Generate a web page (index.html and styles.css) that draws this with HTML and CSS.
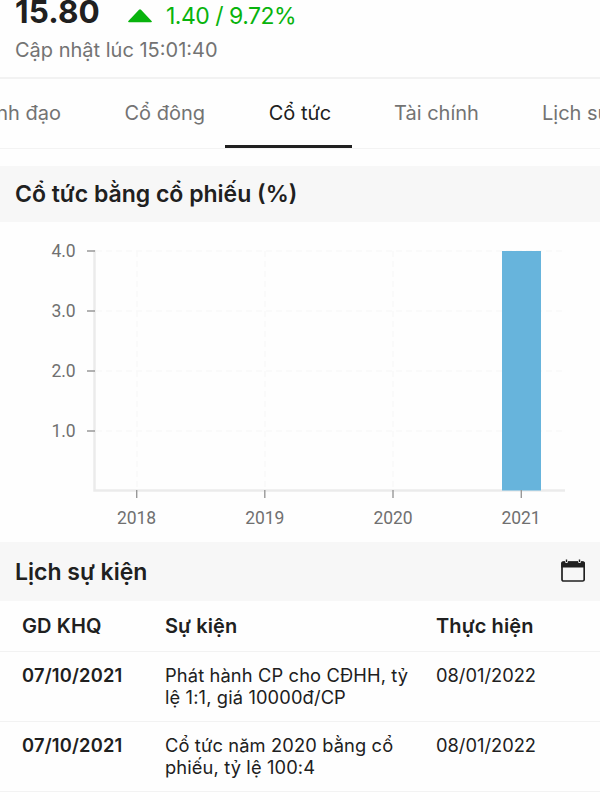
FILE: index.html
```
<!DOCTYPE html>
<html lang="vi">
<head>
<meta charset="utf-8">
<title>Cổ tức</title>
<link rel="stylesheet" href="styles.css">
</head>
<body>
<header class="quote">
  <div class="quote-row">
    <span class="price">15.80</span>
    <svg class="up" width="24" height="14" viewBox="0 0 24 14"><path d="M11 .7Q12 -.2 13 .7L23.6 12Q24.4 13.2 23 13.2H1Q-.4 13.2.4 12Z" fill="#08b30d"/></svg>
    <span class="change">1.40 / 9.72%</span>
  </div>
  <div class="updated">Cập nhật lúc 15:01:40</div>
</header>
<nav class="tabs">
  <a class="tab tab-leaders">Lãnh đạo</a>
  <a class="tab tab-holders">Cổ đông</a>
  <a class="tab tab-dividend active">Cổ tức</a>
  <a class="tab tab-finance">Tài chính</a>
  <a class="tab tab-history">Lịch sử</a>
</nav>
<h2 class="section section-chart">Cổ tức bằng cổ phiếu (%)</h2>
<svg class="chart" width="600" height="320" viewBox="0 222 600 320">
  <g class="grid">
    <path d="M96 251H564M96 311H564M96 371H564M96 431H564M137 251V490M265 251V490M393 251V490"/>
  </g>
  <path class="axis" d="M94.5 250V490.5H565"/>
  <rect x="502" y="251" width="39" height="239.5" fill="#67b4dc"/>
  <path class="ticks" d="M87 251H95M87 311H95M87 371H95M87 431H95M136.7 490V498M264.8 490V498M393 490V498M521.3 490V498"/>
  <g class="label y-label">
    <text x="75.5" y="257.3">4.0</text>
    <text x="75.5" y="317.3">3.0</text>
    <text x="75.5" y="377.3">2.0</text>
    <text x="75.5" y="437.2">1.0</text>
  </g>
  <g class="label x-label">
    <text x="136.5" y="524.4">2018</text>
    <text x="264.7" y="524.4">2019</text>
    <text x="393" y="524.4">2020</text>
    <text x="521" y="524.4">2021</text>
  </g>
</svg>
<h2 class="section section-events">
  <span>Lịch sự kiện</span>
  <svg class="calendar" width="24" height="24" viewBox="0 0 24 24"><rect x="1" y="3.2" width="22.2" height="18.8" rx="1.6" fill="none" stroke="#202020" stroke-width="1.7"/><path d="M.2 8.5V4.3Q.2 2.5 2 2.5H22.2Q24 2.5 24 4.3V8.5Z" fill="#202020"/><circle cx="5.5" cy="2.5" r="1.5" fill="#f7f7f7"/><circle cx="18.5" cy="2.5" r="1.5" fill="#f7f7f7"/><path d="M5.5 .5V3M18.5 .5V3" stroke="#202020" stroke-width="1.4"/></svg>
</h2>
<div class="events">
  <div class="row head"><span>GD KHQ</span><span>Sự kiện</span><span>Thực hiện</span></div>
  <div class="row"><b>07/10/2021</b><span class="event">Phát hành CP cho CĐHH, tỷ<br>lệ 1:1, giá 10000đ/CP</span><span>08/01/2022</span></div>
  <div class="row"><b>07/10/2021</b><span class="event">Cổ tức năm 2020 bằng cổ<br>phiếu, tỷ lệ 100:4</span><span>08/01/2022</span></div>
</div>
</body>
</html>
```
FILE: styles.css
```
* { box-sizing: border-box; }
body {
  margin: 0;
  height: 800px;
  overflow: hidden;
  background: #fefefe;
  color: #202020;
  font-family: Inter, "Liberation Sans", sans-serif;
}
.quote {
  height: 79px;
  padding-left: 15px;
  border-bottom: 2px solid #f2f2f2;
}
.quote-row { display: flex; height: 36px; }
.price { width: 113px; font-size: 31.5px; font-weight: 700; line-height: 23px; letter-spacing: .1px; }
.up { flex: none; margin-top: 9px; }
.change { margin-left: 14px; color: #08b30d; font-size: 23px; line-height: 33px; letter-spacing: -0.5px; }
.updated { font-size: 20px; line-height: 29px; color: #737373; }
.tabs {
  display: flex;
  height: 70px;
  border-bottom: 1px solid #f3f3f3;
}
.tab {
  flex: none;
  height: 69px;
  font-size: 20px;
  line-height: 69px;
  color: #737373;
  text-align: center;
  white-space: nowrap;
}
.tab-leaders { width: 105px; margin-left: -44px; text-align: right; }
.tab-holders { width: 164px; padding-right: 20px; text-align: right; }
.tab-dividend { width: 127px; padding-left: 23px; }
.tab-finance { width: 169px; }
.tab-history { margin-left: 21px; }
.active { color: #202020; border-bottom: 3px solid #202020; }
.section {
  display: flex;
  align-items: center;
  justify-content: space-between;
  margin: 0;
  padding: 0 15px;
  background: #f7f7f7;
  font-size: 23px;
  font-weight: 600;
}
.section-chart { height: 56px; margin-top: 17px; }
.section-events { height: 59px; }
.calendar { margin-top: -2px; }
.chart { display: block; }
.grid { fill: none; stroke: #f9f9f9; stroke-width: 1.5; stroke-dasharray: 6 4; }
.axis { fill: none; stroke: #ebebeb; stroke-width: 2.5; }
.ticks { fill: none; stroke: #999; stroke-width: 1.4; }
.label { font-family: Roboto, sans-serif; font-size: 17.5px; fill: #707070; letter-spacing: -.1px; }
.y-label { text-anchor: end; }
.x-label { text-anchor: middle; }
.row {
  display: grid;
  grid-template-columns: 143px 271px 1fr;
  height: 70px;
  padding: 12px 0 0 22px;
  border-bottom: 1px solid #f2f2f2;
  font-size: 18.3px;
  line-height: 22px;
}
.row b { font-weight: 600; letter-spacing: .2px; }
.event { letter-spacing: .13px; }
.head { height: 51px; padding-top: 14px; font-size: 20px; font-weight: 600; letter-spacing: .1px; }
```
